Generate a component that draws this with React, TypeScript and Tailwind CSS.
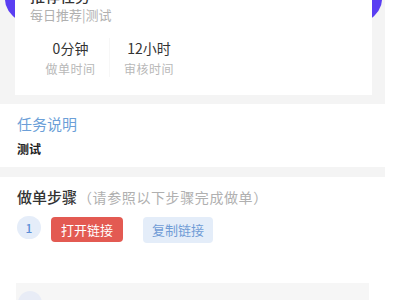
const FONT = { fontFamily: '"Noto Sans CJK SC", "Noto Sans", sans-serif' };

const STATS = [
  { value: "0分钟", label: "做单时间" },
  { value: "12小时", label: "审核时间" },
];

export default function App() {
  return (
    <div className="w-[400px] h-[300px] overflow-hidden bg-white" style={FONT}>
      <div className="w-[385px]">
        {/* Header card */}
        <div className="relative h-[104px] overflow-hidden bg-[#f4f4f4]">
          <div className="absolute left-[5px] top-[-56px] h-[112px] w-[377px] rounded-[50%] bg-[#5a3ef2]" />
          <div className="relative ml-[15px] h-[95px] w-[357px] overflow-hidden bg-white">
            <div className="-mt-[12px] pl-[15px]">
              <div className="text-[15px] leading-[16px] font-medium text-[#333]">推荐任务</div>
              <div className="mt-[3px] text-[13px] leading-[16px] text-[#b0b0b0]">每日推荐|测试</div>
              <div className="mt-[15px] flex pl-[2px]">
                {STATS.map((s, i) => (
                  <div
                    key={s.label}
                    className={
                      "flex w-[78px] flex-col items-center " +
                      (i === 0 ? "border-r border-[#f7f7f7]" : "")
                    }
                  >
                    <div className="text-[14px] leading-[20px] text-[#333]">{s.value}</div>
                    <div className="mt-[2px] text-[12px] leading-[17px] tracking-[0.5px] text-[#b8b8b8]">{s.label}</div>
                  </div>
                ))}
              </div>
            </div>
          </div>
        </div>

        {/* 任务说明 */}
        <div className="px-[17px] pt-[10px] pb-[10px]">
          <div className="text-[15px] leading-[20px] text-[#6c9fd8]">任务说明</div>
          <div className="mt-[6px] text-[12px] leading-[17px] font-bold text-[#222]">测试</div>
        </div>
        <div className="h-[10px] bg-[#f4f4f4]" />

        {/* 做单步骤 */}
        <div className="px-[17px] pt-[10px]">
          <div className="flex items-baseline">
            <span className="text-[15px] leading-[20px] font-medium text-[#333]">做单步骤</span>
            <span className="ml-[1px] text-[14px] leading-[20px] tracking-[0.6px] text-[#b0b0b0]">（请参照以下步骤完成做单）</span>
          </div>
          <div className="mt-[9px] flex items-start">
            <div className="flex h-[23px] w-[24px] items-center justify-center rounded-full bg-[#e5edf9] text-[12px] font-medium text-[#5b8ed6]">
              1
            </div>
            <button className="ml-[10px] mt-[1px] h-[25px] w-[72px] rounded-[4px] bg-[#e35a52] text-[13px] text-white">
              打开链接
            </button>
            <button className="ml-[20px] mt-[1px] h-[26px] w-[70px] rounded-[4px] bg-[#e4edf9] text-[13px] text-[#709cd6]">
              复制链接
            </button>
          </div>
        </div>

        <div className="ml-[16px] mt-[40px] h-[20px] w-[353px] bg-[#f6f6f6] pl-[2px] pt-[8px]">
          <div className="h-[24px] w-[24px] rounded-full bg-[#e8ecf6]" />
        </div>
      </div>
    </div>
  );
}
